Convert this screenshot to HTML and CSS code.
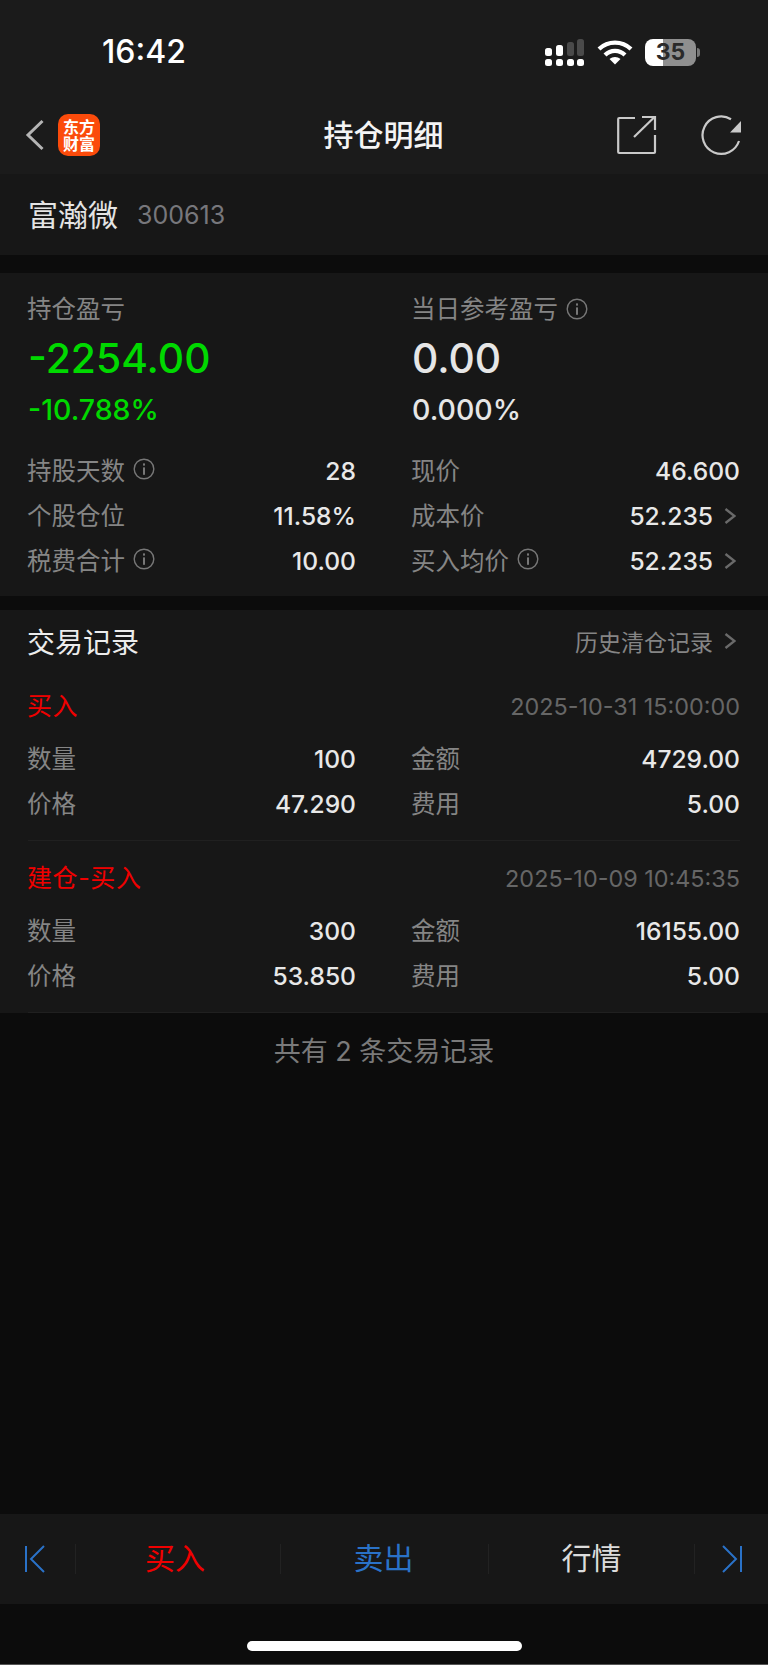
FILE: index.html
```html
<!DOCTYPE html>
<html lang="zh-CN">
<head>
  <meta charset="UTF-8">
  <title>持仓明细</title>
  <link rel="stylesheet" href="styles.css">
</head>
<body>

  <svg class="defs" width="0" height="0">
    <symbol id="info" viewBox="0 0 22 22">
      <circle cx="11" cy="11" r="9.8" fill="none" stroke="currentColor" stroke-width="1.4"/>
      <rect x="10" y="9.4" width="2" height="7.4" fill="currentColor"/>
      <rect x="10" y="5.4" width="2" height="2.2" fill="currentColor"/>
    </symbol>
    <symbol id="arrow" viewBox="0 0 12 16">
      <path d="M1.5 1 L10.5 8 L1.5 15" fill="none" stroke="currentColor" stroke-width="2.4"/>
    </symbol>
  </svg>

  <!-- 顶部 -->
  <header class="top">
    <div class="status">
      <span class="time">16:42</span>
      <div class="status-icons">
        <svg width="40" height="28" viewBox="0 0 40 28">
          <g fill="#fff">
            <rect x="0" y="9" width="7" height="8" rx="2.5"/>
            <rect x="11" y="6" width="7" height="11" rx="2.5"/>
            <rect x="0" y="20" width="7" height="7" rx="2.5"/>
            <rect x="11" y="20" width="7" height="7" rx="2.5"/>
            <rect x="22" y="20" width="7" height="7" rx="2.5"/>
            <rect x="32" y="20" width="7" height="7" rx="2.5"/>
          </g>
          <g fill="#4a4a4a">
            <rect x="22" y="3" width="7" height="14" rx="2.5"/>
            <rect x="32" y="0" width="7" height="17" rx="2.5"/>
          </g>
        </svg>
        <svg width="36" height="26" viewBox="0 0 36 26">
          <g fill="none" stroke="#fff" stroke-width="4.2">
            <path d="M2 10 C11 1.5 25 1.5 34 10"/>
            <path d="M8 16 C13.5 10.5 22.5 10.5 28 16"/>
          </g>
          <path d="M12.5 20 C15.5 17.2 20.5 17.2 23.5 20 L18 25.5 Z" fill="#fff"/>
        </svg>
        <div class="battery">
          <div class="battery-body">35</div>
          <i class="battery-nub"></i>
        </div>
      </div>
    </div>
    <nav class="nav">
      <div class="nav-left">
        <svg class="back" width="20" height="32" viewBox="0 0 20 32">
          <path d="M17.5 2 L3 16 L17.5 30" fill="none" stroke="#b5b5b5" stroke-width="3"/>
        </svg>
        <div class="logo">东方<br>财富</div>
      </div>
      <h1 class="nav-title">持仓明细</h1>
      <div class="nav-right">
        <svg width="40" height="40" viewBox="0 0 40 40">
          <g fill="none" stroke="#c9c9c9" stroke-width="2.2">
            <path d="M18 3 H2.2 a1 1 0 0 0 -1 1 V37 a1 1 0 0 0 1 1 H37 a1 1 0 0 0 1 -1 V20"/>
            <path d="M17 22 L37 2.5"/>
            <path d="M25 2 H38 V15"/>
          </g>
        </svg>
        <svg width="41" height="41" viewBox="0 0 41 41">
          <path d="M38 26 A18.7 18.7 0 1 1 30 4.2" fill="none" stroke="#c9c9c9" stroke-width="2.2"/>
          <path d="M40 6 V17.5 H29 Z" fill="#c9c9c9"/>
        </svg>
      </div>
    </nav>
  </header>

  <!-- 股票名称 -->
  <section class="stock">
    <span class="stock-name">富瀚微</span>
    <span class="stock-code">300613</span>
  </section>

  <!-- 盈亏 -->
  <section class="panel summary">
    <div class="col">
      <div class="label head">持仓盈亏</div>
      <div class="big green">-2254.00</div>
      <div class="pct green">-10.788%</div>
      <div class="rows">
        <div class="row">
          <span class="label">持股天数<svg class="info"><use href="#info"/></svg></span>
          <span class="val">28</span>
        </div>
        <div class="row">
          <span class="label">个股仓位</span>
          <span class="val">11.58%</span>
        </div>
        <div class="row">
          <span class="label">税费合计<svg class="info"><use href="#info"/></svg></span>
          <span class="val">10.00</span>
        </div>
      </div>
    </div>
    <div class="col">
      <div class="label head">当日参考盈亏<svg class="info"><use href="#info"/></svg></div>
      <div class="big">0.00</div>
      <div class="pct">0.000%</div>
      <div class="rows">
        <div class="row">
          <span class="label">现价</span>
          <span class="val">46.600</span>
        </div>
        <div class="row">
          <span class="label">成本价</span>
          <span class="val">52.235<svg class="arrow"><use href="#arrow"/></svg></span>
        </div>
        <div class="row">
          <span class="label">买入均价<svg class="info"><use href="#info"/></svg></span>
          <span class="val">52.235<svg class="arrow"><use href="#arrow"/></svg></span>
        </div>
      </div>
    </div>
  </section>

  <!-- 交易记录 -->
  <section class="trades">
    <div class="trades-head">
      <span class="trades-title">交易记录</span>
      <span class="trades-link">历史清仓记录<svg class="arrow"><use href="#arrow"/></svg></span>
    </div>

    <div class="trade">
      <div class="trade-top">
        <span class="side">买入</span>
        <span class="date">2025-10-31 15:00:00</span>
      </div>
      <div class="trade-grid">
        <div class="row"><span class="label">数量</span><span class="val">100</span></div>
        <div class="row"><span class="label">金额</span><span class="val">4729.00</span></div>
        <div class="row"><span class="label">价格</span><span class="val">47.290</span></div>
        <div class="row"><span class="label">费用</span><span class="val">5.00</span></div>
      </div>
    </div>

    <div class="trade">
      <div class="trade-top">
        <span class="side">建仓-买入</span>
        <span class="date">2025-10-09 10:45:35</span>
      </div>
      <div class="trade-grid">
        <div class="row"><span class="label">数量</span><span class="val">300</span></div>
        <div class="row"><span class="label">金额</span><span class="val">16155.00</span></div>
        <div class="row"><span class="label">价格</span><span class="val">53.850</span></div>
        <div class="row"><span class="label">费用</span><span class="val">5.00</span></div>
      </div>
    </div>
  </section>

  <div class="total">共有 2 条交易记录</div>

  <!-- 底部按钮 -->
  <footer class="tabbar">
    <div class="tab tab-first">
      <svg width="22" height="28" viewBox="0 0 22 28">
        <path d="M2 1 V27 M20 1 L7 14 L20 27" fill="none" stroke="#2a72c8" stroke-width="2"/>
      </svg>
    </div>
    <div class="tab red">买入</div>
    <div class="tab blue">卖出</div>
    <div class="tab">行情</div>
    <div class="tab">
      <svg width="22" height="28" viewBox="0 0 22 28">
        <path d="M20 1 V27 M2 1 L15 14 L2 27" fill="none" stroke="#2a72c8" stroke-width="2"/>
      </svg>
    </div>
  </footer>

  <div class="home"><i class="home-bar"></i></div>

</body>
</html>
```

FILE: styles.css
```css
* {
  box-sizing: border-box;
}

body {
  margin: 0;
  height: 100vh;
  display: flex;
  flex-direction: column;
  background: #0c0c0c;
  color: #e6e6e6;
  font-family: Inter, "Noto Sans CJK SC", sans-serif;
}

.defs {
  position: absolute;
}

/* 顶部 */
.top {
  height: 174px;
  background: #1b1b1b;
}

.status {
  height: 104px;
  display: flex;
  justify-content: space-between;
  padding: 34px 68px 0 102px;
}

.time {
  font-size: 32px;
  line-height: 36px;
  font-weight: 500;
  color: #fff;
}

.status-icons {
  display: flex;
  align-items: flex-start;
  gap: 12px;
  padding: 5px 0 0 0;
}

.battery {
  display: flex;
  align-items: center;
}

.battery-body {
  width: 51px;
  height: 27px;
  border-radius: 8px;
  background: linear-gradient(to right, #fff 0, #fff 18px, #8f8f8f 18px);
  color: #2a2a2a;
  font-size: 23px;
  line-height: 27px;
  font-weight: 700;
  text-align: center;
}

.battery-nub {
  width: 3px;
  height: 9px;
  margin-left: 1px;
  border-radius: 0 3px 3px 0;
  background: #777;
}

.nav {
  height: 70px;
  display: grid;
  grid-template-columns: 1fr auto 1fr;
  align-items: center;
  padding: 0 26px 8px 25px;
}

.nav-left {
  display: flex;
  align-items: center;
  gap: 13px;
}

.logo {
  width: 42px;
  height: 42px;
  border-radius: 10px;
  background: #fb4b0b;
  color: #fff;
  font-family: "Noto Sans CJK SC", sans-serif;
  font-size: 16px;
  line-height: 17px;
  font-weight: 700;
  text-align: center;
  padding-top: 4px;
}

.nav-title {
  margin: 0;
  font-size: 30px;
  line-height: 40px;
  font-weight: 500;
  color: #f4f4f4;
}

.nav-right {
  display: flex;
  justify-content: flex-end;
  gap: 44px;
}

/* 股票名称 */
.stock {
  height: 81px;
  background: #171717;
  display: flex;
  align-items: center;
  gap: 19px;
  padding: 0 28px 0 28px;
}

.stock-name {
  font-size: 30px;
  line-height: 40px;
  color: #e4e4e4;
}

.stock-code {
  font-size: 25px;
  color: #77777c;
}

/* 盈亏 */
.panel {
  margin-top: 18px;
}

.summary {
  background: #171717;
  height: 323px;
  display: grid;
  grid-template-columns: 328px 328px;
  gap: 56px;
  padding: 18px 28px 12px;
}

.label {
  font-size: 24.5px;
  color: #858585;
  display: inline-flex;
  align-items: center;
  margin: -3px 0 0 -1px;
}

.head {
  display: flex;
  line-height: 36px;
  margin-top: 0;
}

.info {
  width: 22px;
  height: 22px;
  margin-left: 8px;
  color: #777;
}

.big {
  font-size: 40.8px;
  line-height: 62px;
  font-weight: 500;
}

.pct {
  font-size: 28.5px;
  line-height: 42px;
  font-weight: 500;
}

.green {
  color: #00d900;
}

.rows {
  margin-top: 17px;
}

.row {
  height: 45px;
  display: flex;
  justify-content: space-between;
  align-items: center;
}

.val {
  font-size: 24.6px;
  font-weight: 500;
  color: #e8e8e8;
  display: inline-flex;
  align-items: center;
}

.arrow {
  width: 12px;
  height: 16px;
  margin-left: 11px;
  margin-right: 4px;
  color: #6a6a6a;
}

/* 交易记录 */
.trades {
  margin-top: 14px;
  padding: 0 28px;
  background: #171717;
}

.trades-head {
  height: 59px;
  display: flex;
  justify-content: space-between;
  align-items: center;
  padding-top: 2px;
}

.trades-title {
  font-size: 28px;
  color: #ececec;
  margin-left: -1px;
}

.trades-link {
  font-size: 23px;
  color: #858585;
  display: inline-flex;
  align-items: center;
}

.trade {
  padding: 7px 0 14px;
  border-bottom: 1px solid #202020;
}

.trade-top {
  height: 60px;
  display: flex;
  justify-content: space-between;
  align-items: center;
}

.side {
  font-size: 25px;
  letter-spacing: 0.6px;
  color: #f00000;
  margin: -4px 0 0 -1px;
}

.date {
  font-size: 23.4px;
  color: #666;
}

.trade-grid {
  display: grid;
  grid-template-columns: 328px 328px;
  column-gap: 56px;
}

.total {
  flex: 1;
  padding-top: 20px;
  font-size: 27px;
  line-height: 38px;
  color: #7a7a7a;
  text-align: center;
}

/* 底部按钮 */
.tabbar {
  height: 90px;
  display: grid;
  grid-template-columns: 75px 205px 208px 206px 74px;
  align-items: center;
  background: #171717;
}

.tab {
  height: 30px;
  display: flex;
  justify-content: center;
  align-items: center;
  font-size: 30px;
  line-height: 30px;
  padding-bottom: 2px;
  color: #dcdcdc;
  border-left: 1px solid #222;
}

.tab svg {
  margin-top: 2px;
}

.tab-first {
  border-left: none;
  padding-right: 6px;
}

.red {
  color: #f00000;
  padding-right: 6px;
}

.blue {
  color: #2a72c8;
  padding-right: 2px;
}

.home {
  height: 61px;
  display: flex;
  justify-content: center;
  padding-top: 37px;
  border-bottom: 1px solid #555;
}

.home-bar {
  width: 275px;
  height: 10px;
  border-radius: 5px;
  background: #fff;
}
```
